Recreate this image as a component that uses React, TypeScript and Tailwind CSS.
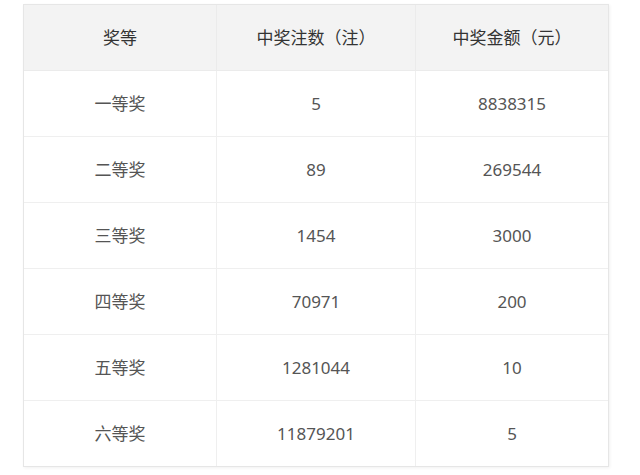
import React from "react";

const rows: [string, string, string][] = [
  ["一等奖", "5", "8838315"],
  ["二等奖", "89", "269544"],
  ["三等奖", "1454", "3000"],
  ["四等奖", "70971", "200"],
  ["五等奖", "1281044", "10"],
  ["六等奖", "11879201", "5"],
];

export default function App() {
  return (
    <div
      className="w-[640px] h-[475px] bg-white pt-[4px] pl-[23px]"
      style={{ fontFamily: '"Noto Sans", "Noto Sans CJK SC", sans-serif' }}
    >
      <div className="w-[586px] border border-[#e6e6e6] shadow-[1px_1px_3px_rgba(0,0,0,0.06)]">
        <div className="grid grid-cols-[193px_199px_1fr] h-[66px] bg-[#f3f3f3] text-[#333] text-[17px] border-b border-[#ebebeb]">
          <div className="flex items-center justify-center border-r border-[#ebebeb]">奖等</div>
          <div className="flex items-center justify-center border-r border-[#ebebeb]">中奖注数（注）</div>
          <div className="flex items-center justify-center">中奖金额（元）</div>
        </div>
        {rows.map((r, i) => (
          <div
            key={i}
            className={
              i < rows.length - 1
                ? "grid grid-cols-[193px_199px_1fr] h-[66px] text-[#555] text-[17px] border-b border-[#efefef]"
                : "grid grid-cols-[193px_199px_1fr] h-[65px] text-[#555] text-[17px]"
            }
          >
            <div className="flex items-center justify-center border-r border-[#efefef]">{r[0]}</div>
            <div className="flex items-center justify-center border-r border-[#efefef]">{r[1]}</div>
            <div className="flex items-center justify-center">{r[2]}</div>
          </div>
        ))}
      </div>
    </div>
  );
}
